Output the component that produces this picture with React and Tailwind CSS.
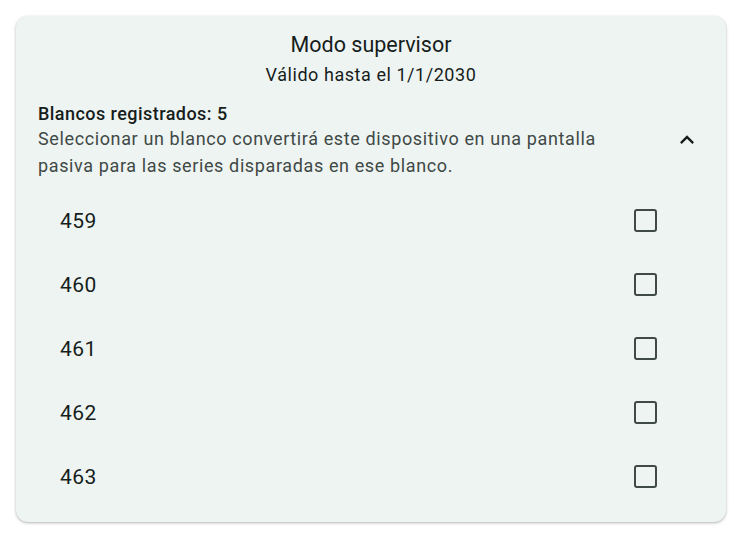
import React from "react";

const targets = ["459", "460", "461", "462", "463"];

export default function App() {
  return (
    <div
      className="w-[742px] h-[538px] bg-white p-4"
      style={{ fontFamily: "Roboto, sans-serif" }}
    >
      <div className="w-[710px] h-[506px] bg-[#eef4f2] rounded-xl shadow-[0_1px_3px_rgba(0,0,0,0.3)] flex flex-col">
        {/* header */}
        <div className="flex flex-col items-center pt-[16px]">
          <h1 className="text-[21.5px] leading-[26px] text-[#161d1b]">
            Modo supervisor
          </h1>
          <p className="text-[18px] leading-[22px] mt-[6px] text-[#161d1b] tracking-[0.55px]">
            Válido hasta el 1/1/2030
          </p>
        </div>

        {/* expansion tile */}
        <div className="flex items-center pl-[22px] pr-[25px] mt-[17px]">
          <div className="flex-1 pr-6">
            <div className="text-[18px] leading-[22px] font-[500] text-[#161d1b] tracking-[0.45px]">
              Blancos registrados: 5
            </div>
            <div className="text-[18px] leading-[27px] text-[#3f4946] tracking-[0.62px] pr-[20px]">
              Seleccionar un blanco convertirá este dispositivo en una pantalla
              pasiva para las series disparadas en ese blanco.
            </div>
          </div>
          <svg width="28" height="28" viewBox="0 0 24 24" className="mb-[3px]">
            <path
              d="M7.41 15.41 12 10.83l4.59 4.58L18 14l-6-6-6 6z"
              fill="#161d1b"
            />
          </svg>
        </div>

        {/* list */}
        <div className="flex flex-col mt-[10px]">
          {targets.map((t) => (
            <div key={t} className="h-16 flex items-center pl-[44px] pr-[69px]">
              <span className="flex-1 text-[21px] text-[#161d1b] tracking-[0.5px] pt-[2px]">
                {t}
              </span>
              <div className="w-[23px] h-[23px] border-2 border-[#3f4946] rounded-[3px] -mt-[1px]" />
            </div>
          ))}
        </div>
      </div>
    </div>
  );
}
